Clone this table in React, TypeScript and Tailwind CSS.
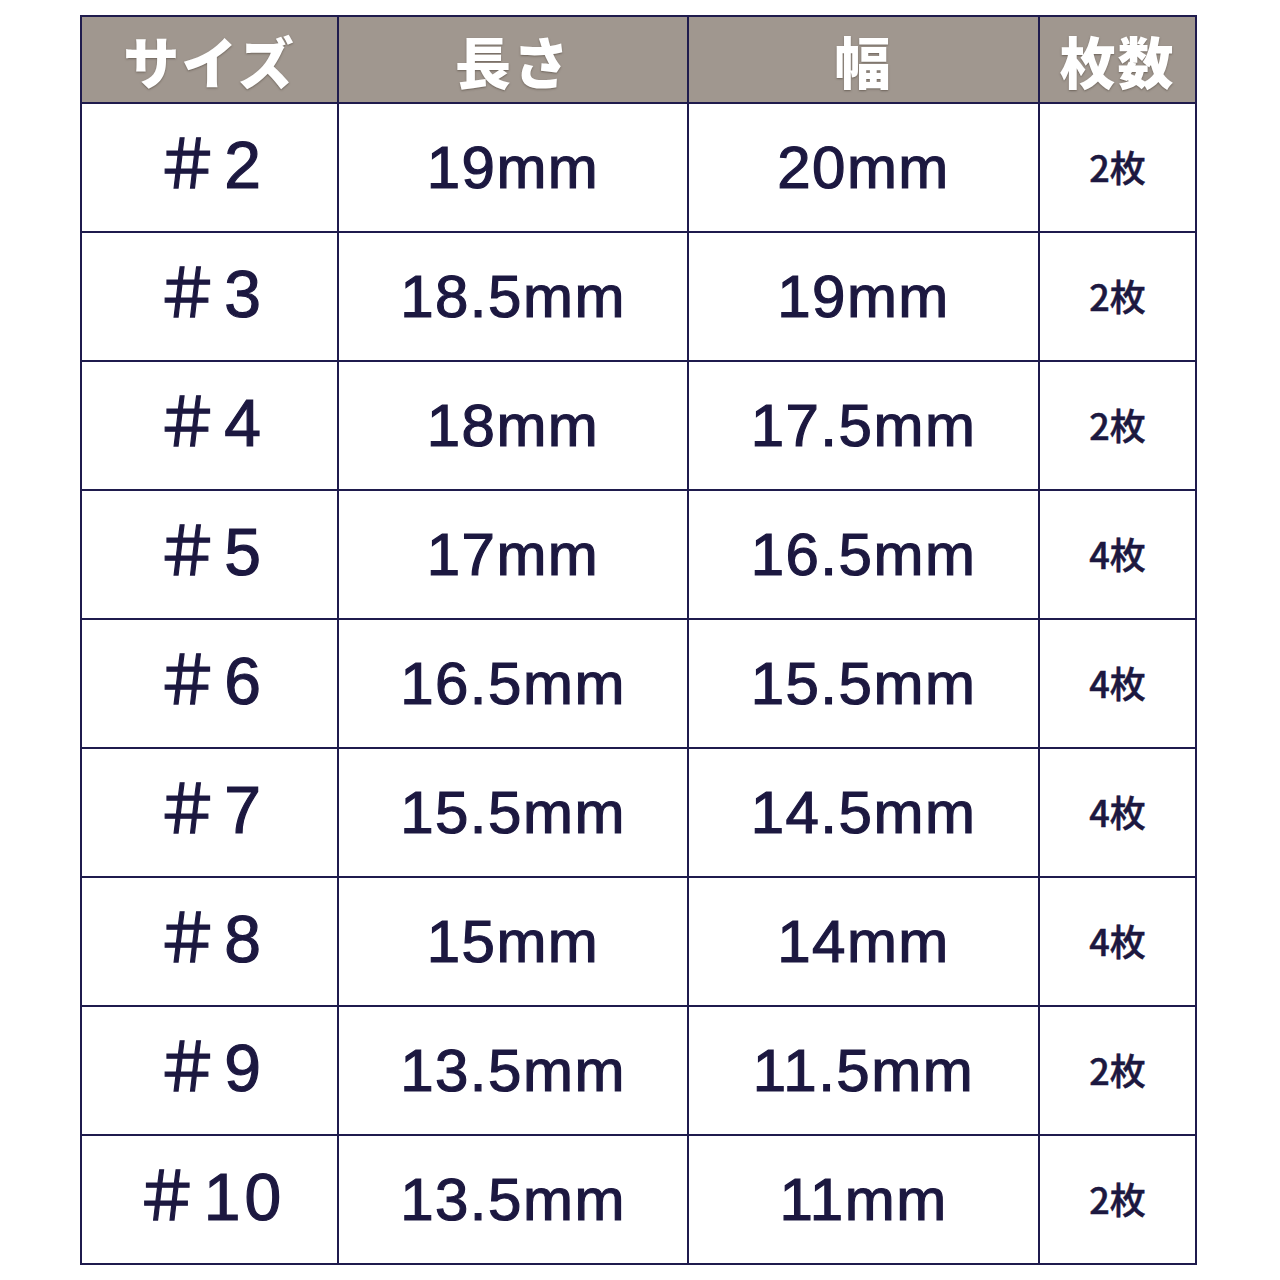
const rows = [
  ['＃2', '19mm', '20mm', '2枚'],
  ['＃3', '18.5mm', '19mm', '2枚'],
  ['＃4', '18mm', '17.5mm', '2枚'],
  ['＃5', '17mm', '16.5mm', '4枚'],
  ['＃6', '16.5mm', '15.5mm', '4枚'],
  ['＃7', '15.5mm', '14.5mm', '4枚'],
  ['＃8', '15mm', '14mm', '4枚'],
  ['＃9', '13.5mm', '11.5mm', '2枚'],
  ['＃10', '13.5mm', '11mm', '2枚'],
]

const headers = ['サイズ', '長さ', '幅', '枚数']

const cols = 'grid grid-cols-[257px_350px_351px_155px]'

export default function App() {
  return (
    <div className="w-[1280px] h-[1280px] bg-white pt-[15px] pl-[80px] font-['Liberation_Sans','Noto_Sans_CJK_JP',sans-serif]">
      <div className="w-fit border-2 border-[#1f1b4d]">
        {/* header */}
        <div className={`${cols} h-[85px] bg-[#a0978f]`}>
          {headers.map((h, i) => (
            <div
              key={h}
              className={`flex items-center justify-center text-white text-[56px] font-black tracking-[2px] font-['Noto_Sans_CJK_JP',sans-serif] [text-shadow:0_1px_2px_rgba(60,50,40,0.5)] ${i < 3 ? 'border-r-2 border-[#1f1b4d]' : ''}`}
            >
              {h}
            </div>
          ))}
        </div>
        {rows.map((r) => (
          <div key={r[0]} className={`${cols} h-[129px] border-t-2 border-[#1f1b4d] text-[#1c1840] [-webkit-text-stroke:1.2px_#1c1840]`}>
            <div className="flex items-center justify-center border-r-2 border-[#1f1b4d] text-[66px] tracking-[4px] pb-1">
              {r[0]}
            </div>
            <div className="flex items-center justify-center border-r-2 border-[#1f1b4d] text-[60px] tracking-[1.5px]">
              {r[1]}
            </div>
            <div className="flex items-center justify-center border-r-2 border-[#1f1b4d] text-[60px] tracking-[1.5px]">
              {r[2]}
            </div>
            <div className="flex items-center justify-center text-[36px] font-medium font-['Noto_Sans_CJK_JP',sans-serif] [-webkit-text-stroke:0.5px_#1c1840] pb-1">
              {r[3]}
            </div>
          </div>
        ))}
      </div>
    </div>
  )
}
